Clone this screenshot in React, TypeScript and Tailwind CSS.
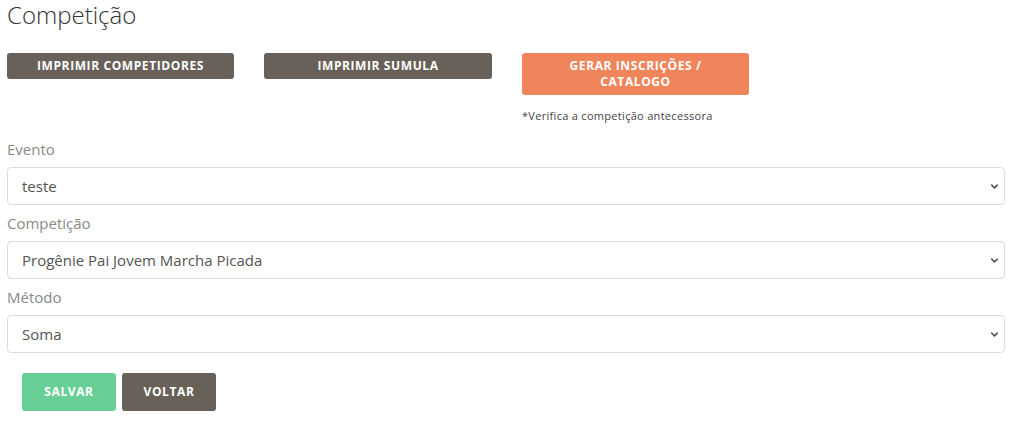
import { ChevronDown } from 'lucide-react';

const font = { fontFamily: '"Open Sans", "Noto Sans", sans-serif' };

function Field({ label, value }: { label: string; value: string }) {
  return (
    <div>
      <div className="h-[36px] flex items-center text-[15px] text-[#8a8a8a]">{label}</div>
      <div className="h-[38px] flex items-center justify-between border border-[#dcdcdc] rounded-[4px] pl-[14px] pr-[4px] text-[15px] text-[#555]">
        <span>{value}</span>
        <ChevronDown size={11} strokeWidth={3.5} className="text-[#555]" />
      </div>
    </div>
  );
}

export default function App() {
  return (
    <div className="w-[1013px] h-[428px] bg-white px-[7px] pr-[8px]" style={font}>
      <h1 className="text-[24px] font-light text-[#333] leading-[30px]">Competição</h1>

      {/* Print buttons */}
      <div className="flex gap-[30px] mt-[23px] items-start">
        <button className="w-[227px] h-[26px] rounded-[3px] bg-[#686159] text-white text-[12px] font-bold tracking-[0.6px]">
          IMPRIMIR COMPETIDORES
        </button>
        <button className="w-[228px] h-[26px] rounded-[3px] bg-[#686159] text-white text-[12px] font-bold tracking-[0.6px]">
          IMPRIMIR SUMULA
        </button>
        <div className="flex flex-col">
          <button className="w-[227px] h-[42px] rounded-[3px] bg-[#f0845a] text-white text-[12px] font-bold leading-[16px] tracking-[0.6px]">
            GERAR INSCRIÇÕES /<br />CATALOGO
          </button>
          <span className="text-[11px] text-[#444] mt-[14px] leading-[14px] tracking-[0.3px]">*Verifica a competição antecessora</span>
        </div>
      </div>

      <div className="mt-[8px]">
        <Field label="Evento" value="teste" />
        <Field label="Competição" value="Progênie Pai Jovem Marcha Picada" />
        <Field label="Método" value="Soma" />
      </div>

      <div className="flex gap-[6px] mt-[20px] ml-[15px]">
        <button className="w-[94px] h-[38px] rounded-[3px] bg-[#68cf97] text-white text-[12px] font-bold tracking-[0.6px]">SALVAR</button>
        <button className="w-[94px] h-[38px] rounded-[3px] bg-[#686159] text-white text-[12px] font-bold tracking-[0.6px]">VOLTAR</button>
      </div>
    </div>
  );
}
